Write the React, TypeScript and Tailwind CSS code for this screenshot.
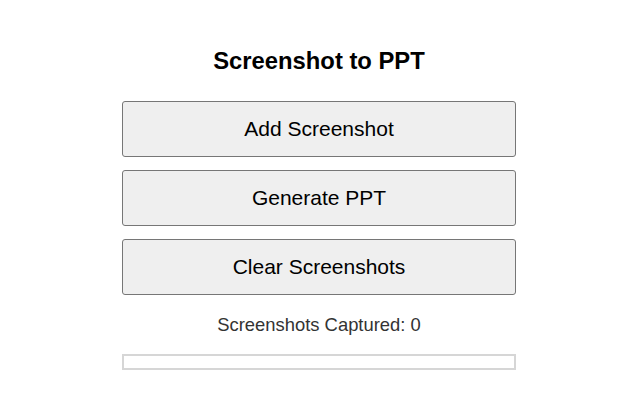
import React from "react";

const buttons = ["Add Screenshot", "Generate PPT", "Clear Screenshots"];

export default function App() {
  return (
    <div className="min-h-[400px] w-full bg-white font-['Liberation_Sans',Arial,sans-serif]">
      <div className="mx-auto w-[396px] pr-[2px] pt-[47px]">
        <h2 className="text-center text-[23.8px] leading-[28px] font-bold text-black">
          Screenshot to PPT
        </h2>
        <div className="mt-[26px] flex flex-col gap-[13px]">
          {buttons.map((label) => (
            <button
              key={label}
              className="h-[56px] w-full rounded-[3px] border border-[#767676] bg-[#efefef] text-[21px] text-black"
            >
              {label}
            </button>
          ))}
        </div>
        <p className="mt-[19px] text-center text-[18.4px] leading-[22px] text-[#333]">
          Screenshots Captured: 0
        </p>
        <div className="mt-[18px] h-[16px] w-full border-2 border-[#d6d6d6] bg-white" />
      </div>
    </div>
  );
}
